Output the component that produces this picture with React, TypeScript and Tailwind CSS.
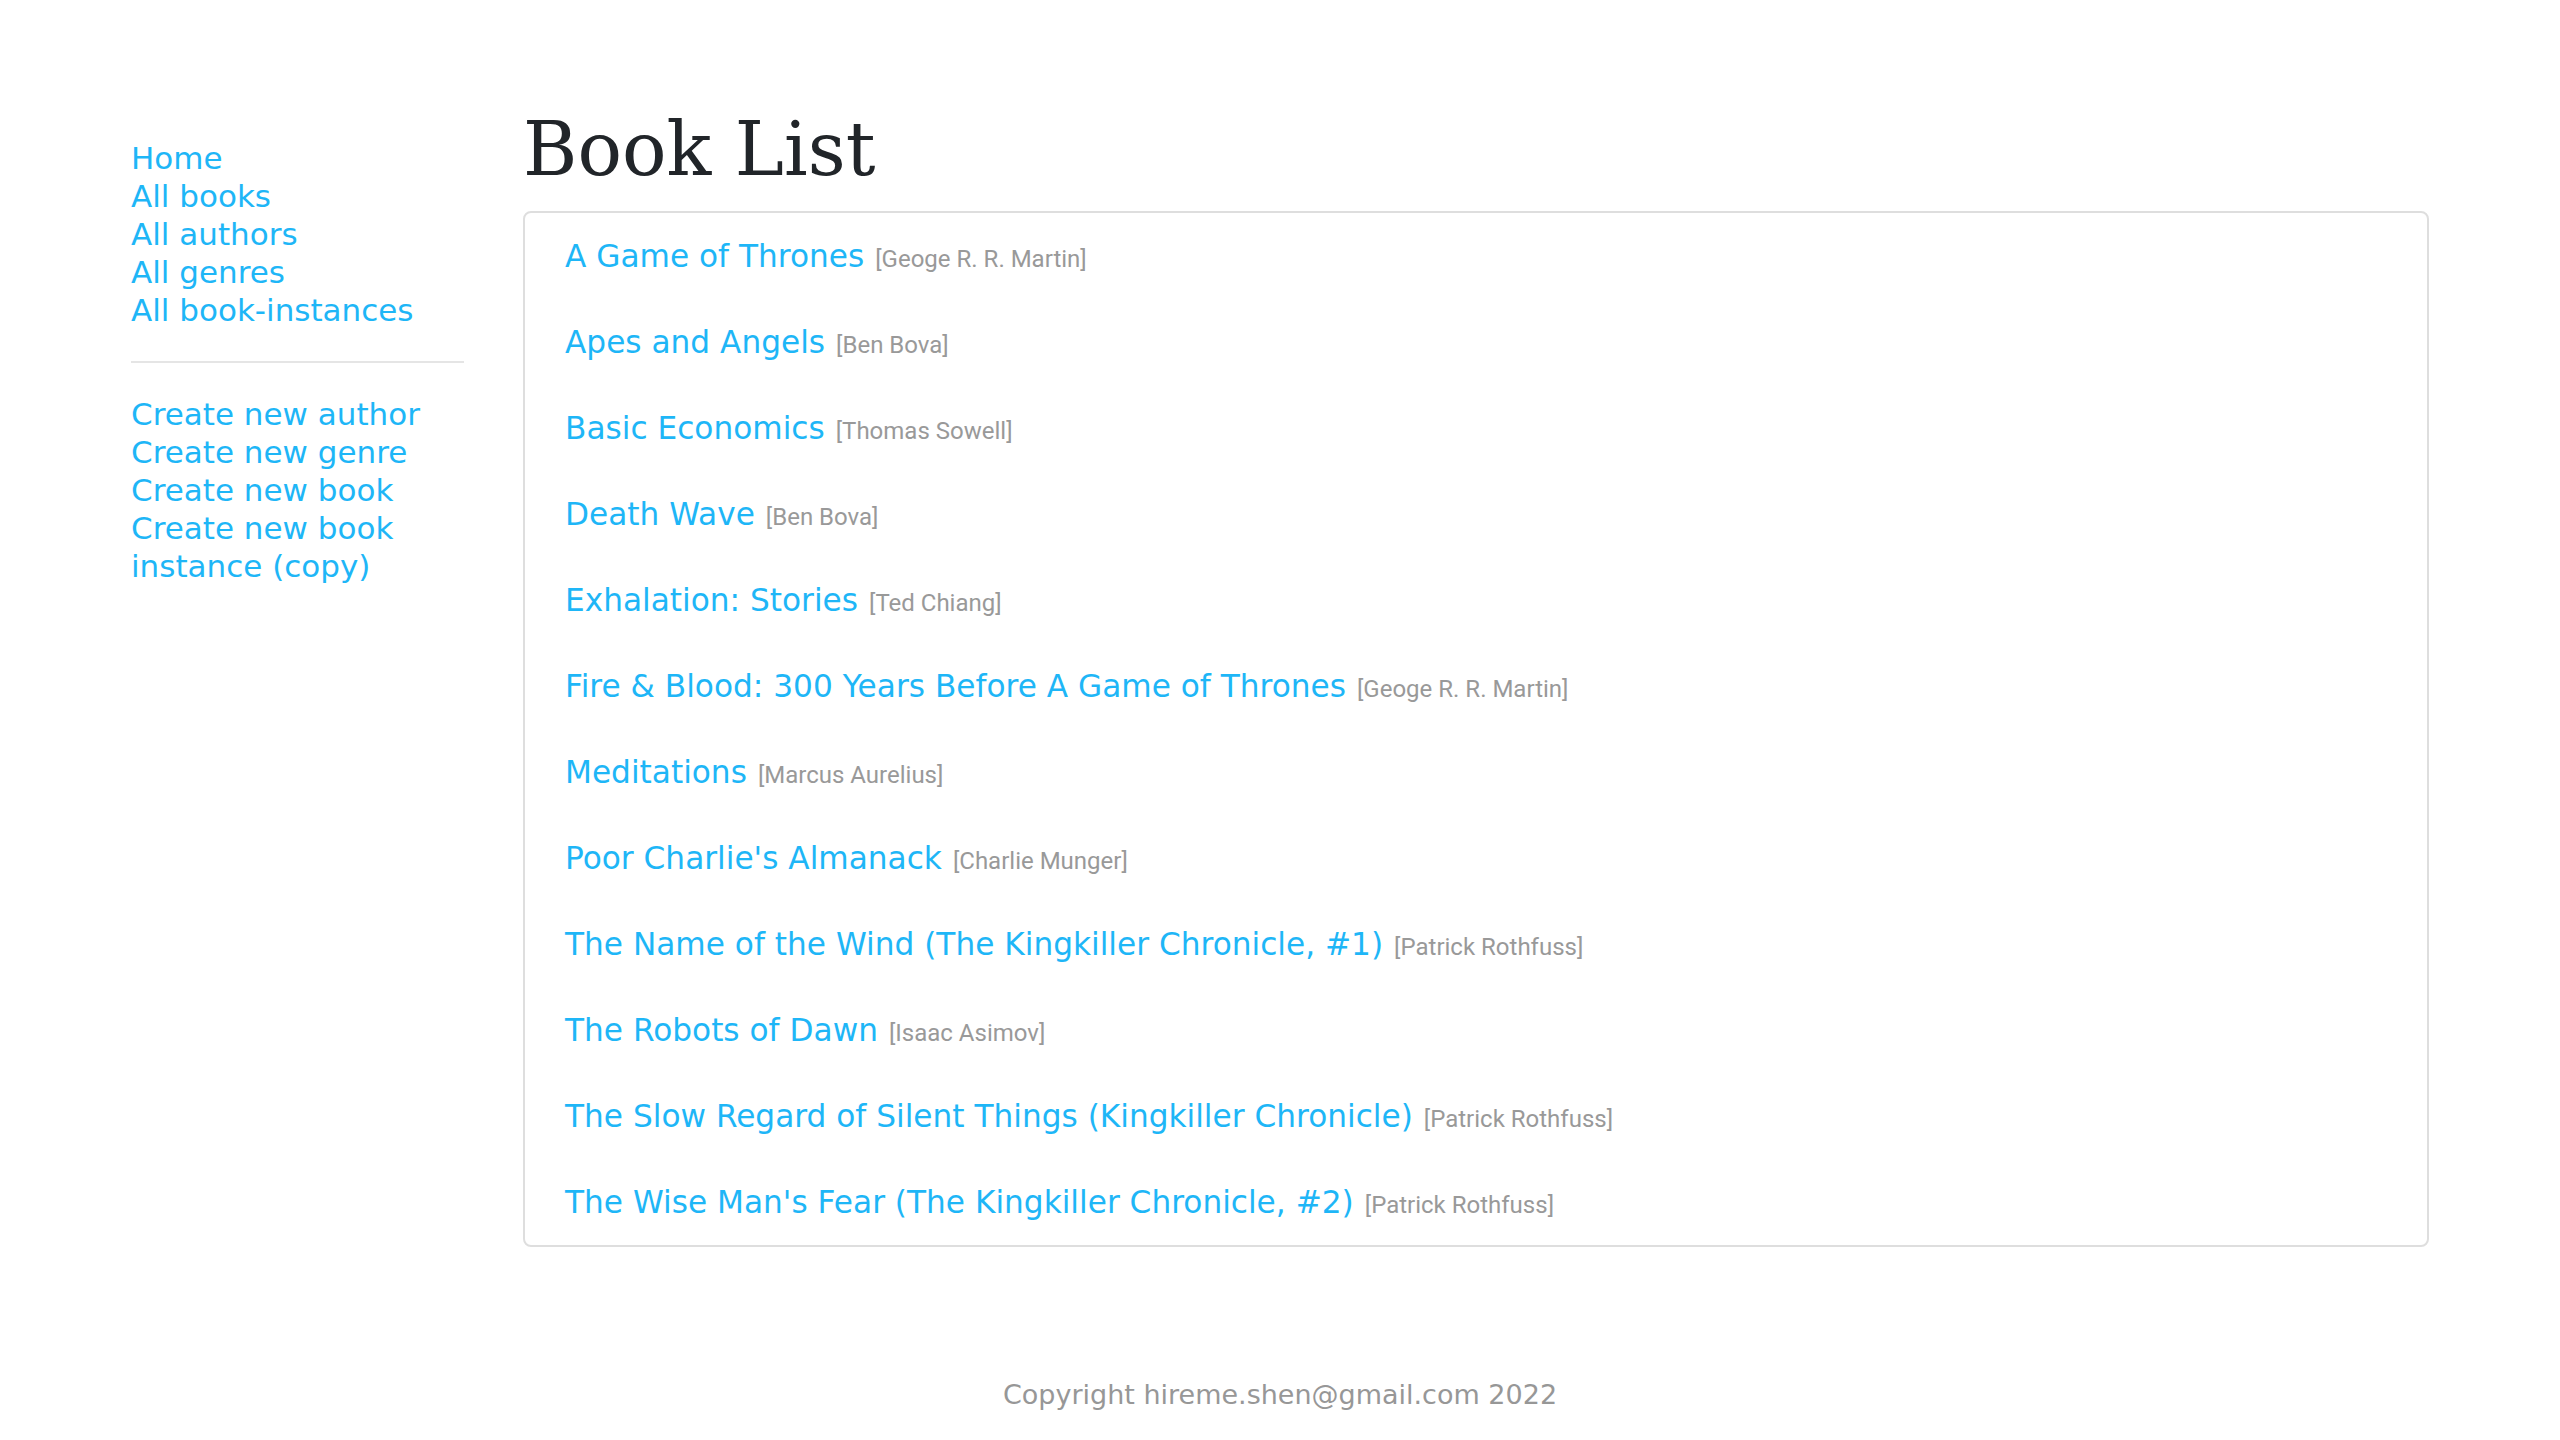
const books = [
  { title: 'A Game of Thrones', author: 'Geoge R. R. Martin' },
  { title: 'Apes and Angels', author: 'Ben Bova' },
  { title: 'Basic Economics', author: 'Thomas Sowell' },
  { title: 'Death Wave', author: 'Ben Bova' },
  { title: 'Exhalation: Stories', author: 'Ted Chiang' },
  { title: 'Fire & Blood: 300 Years Before A Game of Thrones', author: 'Geoge R. R. Martin' },
  { title: 'Meditations', author: 'Marcus Aurelius' },
  { title: "Poor Charlie's Almanack", author: 'Charlie Munger' },
  { title: 'The Name of the Wind (The Kingkiller Chronicle, #1)', author: 'Patrick Rothfuss' },
  { title: 'The Robots of Dawn', author: 'Isaac Asimov' },
  { title: 'The Slow Regard of Silent Things (Kingkiller Chronicle)', author: 'Patrick Rothfuss' },
  { title: "The Wise Man's Fear (The Kingkiller Chronicle, #2)", author: 'Patrick Rothfuss' },
];

const navTop = ['Home', 'All books', 'All authors', 'All genres', 'All book-instances'];
const navCreate = ['Create new author', 'Create new genre', 'Create new book', 'Create new book instance (copy)'];

export default function App() {
  return (
    <div className="min-h-screen bg-white font-['DejaVu_Sans',sans-serif]">
      <div className="flex pl-[131px] pr-[131px] pt-[102px]">
        {/* Sidebar */}
        <nav className="w-[333px] shrink-0 mt-[37px] text-[31px] leading-[38px] text-[#1eb6f7]">
          <ul>
            {navTop.map((item) => (
              <li key={item}>
                <a href="#">{item}</a>
              </li>
            ))}
          </ul>
          <hr className="my-[32px] border-t-2 border-[#e5e5e5]" />
          <ul>
            {navCreate.map((item) => (
              <li key={item}>
                <a href="#">{item}</a>
              </li>
            ))}
          </ul>
        </nav>

        {/* Main */}
        <main className="flex-1 ml-[59px]">
          <h1 className="text-[74px] leading-[94px] text-[#212529] font-['DejaVu_Serif',serif] mb-[15px]">
            Book List
          </h1>
          <ul className="border-2 border-[#dedede] rounded-[8px] px-[40px]">
            {books.map((b) => (
              <li key={b.title} className="flex items-baseline gap-[11px] py-[24px]">
                <a href="#" className="text-[31.2px] leading-[38px] text-[#1eb6f7]">
                  {b.title}
                </a>
                <span className="text-[24px] leading-none text-[#999999] font-['Roboto',sans-serif]">
                  [{b.author}]
                </span>
              </li>
            ))}
          </ul>
        </main>
      </div>

      <footer className="mt-[128px] text-center text-[27px] leading-[40px] text-[#979797]">
        Copyright hireme.shen@gmail.com 2022
      </footer>
    </div>
  );
}
